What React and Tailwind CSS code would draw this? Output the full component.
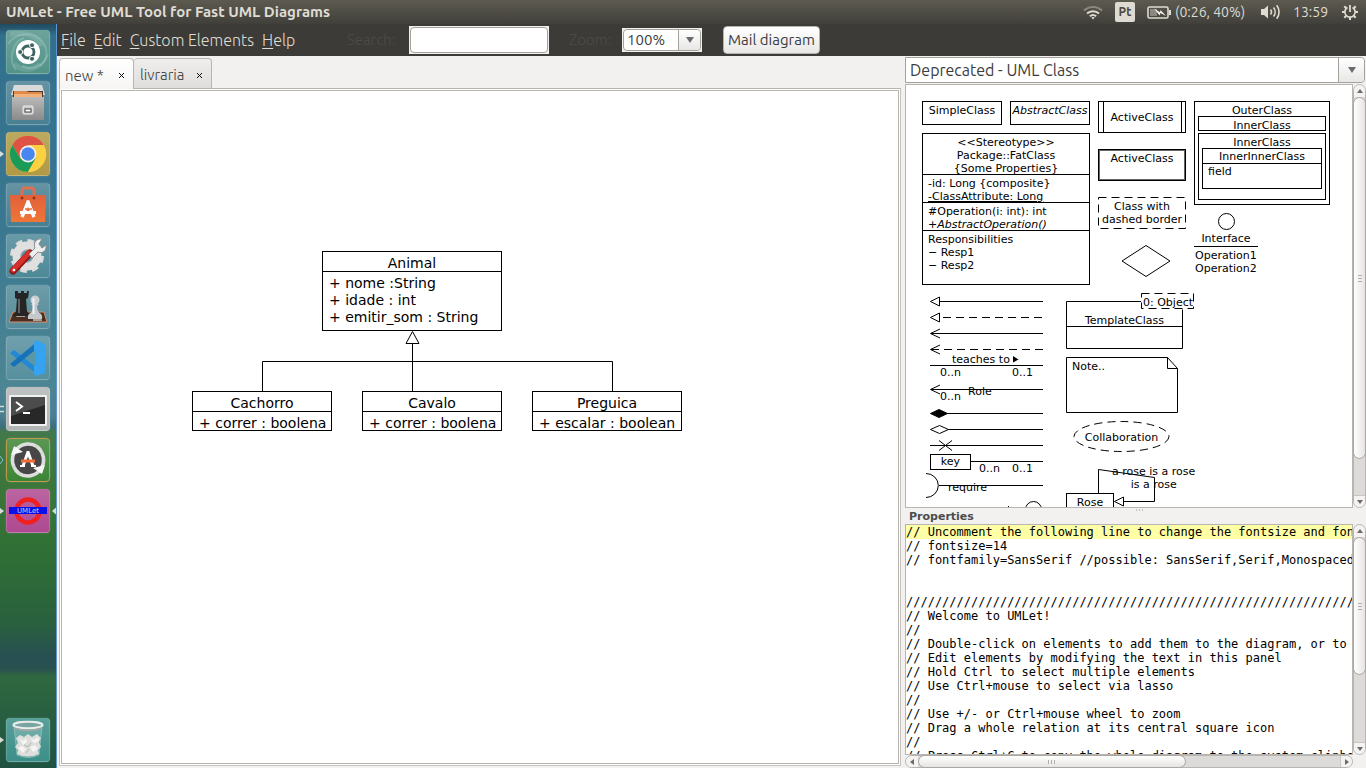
const UI = "font-['Ubuntu','Open_Sans','Noto_Sans',sans-serif]";
const DIAGRAM = "font-['DejaVu_Sans',sans-serif]";

const NOTES = `// Uncomment the following line to change the fontsize and font:
// fontsize=14
// fontfamily=SansSerif //possible: SansSerif,Serif,Monospaced


//////////////////////////////////////////////////////////////////////////////////////////////
// Welcome to UMLet!
//
// Double-click on elements to add them to the diagram, or to copy them
// Edit elements by modifying the text in this panel
// Hold Ctrl to select multiple elements
// Use Ctrl+mouse to select via lasso
//
// Use +/- or Ctrl+mouse wheel to zoom
// Drag a whole relation at its central square icon
//
// Press Ctrl+C to copy the whole diagram to the system clipboard`;

/* ---------- top panel ---------- */

function WifiIcon() {
  return (
    <svg width="20" height="15" viewBox="0 0 20 15" fill="none" strokeWidth="2">
      <path d="M1 5.5a13 13 0 0 1 18 0" stroke="#8b8880" />
      <path d="M4 8.6a9 9 0 0 1 12 0" stroke="#dfdbd2" />
      <path d="M6.8 11.3a5 5 0 0 1 6.4 0" stroke="#dfdbd2" />
      <path d="M8.3 12.6L10 14.6l1.7-2a3 3 0 0 0-3.4 0z" fill="#dfdbd2" />
    </svg>
  );
}

function BatteryIcon() {
  return (
    <svg width="24" height="13" viewBox="0 0 24 13">
      <rect x="1" y="1" width="20" height="11" rx="1.5" fill="none" stroke="#dfdbd2" strokeWidth="1.6" />
      <rect x="22" y="4" width="2" height="5" fill="#dfdbd2" />
      <rect x="3" y="3" width="7" height="7" fill="#8b8880" />
      <path d="M7 2.5l6 3.8.6-2.4L19 10l-5.6-3-.8 2.6z" fill="#f4f1ea" />
    </svg>
  );
}

function VolumeIcon() {
  return (
    <svg width="20" height="16" viewBox="0 0 20 16" fill="none" stroke="#dfdbd2" strokeWidth="1.6">
      <path d="M0 5h3l4-3.5v13L3 11H0z" fill="#dfdbd2" stroke="none" />
      <path d="M9.5 5.5a4 4 0 0 1 0 5" />
      <path d="M12.5 3.5a7 7 0 0 1 0 9" />
      <path d="M15.7 1.2a11 11 0 0 1 0 13.6" />
    </svg>
  );
}

function PowerIcon() {
  return (
    <svg width="16" height="16" viewBox="0 0 16 16" fill="none" stroke="#dfdbd2">
      <path d="M5.500 3.400a5.200 5.200 0 1 0 5 0" strokeWidth="1.700" />
      <path d="M8 1v7" strokeWidth="1.800" />
      <path d="M0 8h3M13 8h3M8 13v3M2.3 2.3l2 2M13.7 2.3l-2 2M2.3 13.7l2-2M13.7 13.7l-2-2" strokeWidth="2" />
    </svg>
  );
}

function TopPanel() {
  return (
    <header className="flex h-6 shrink-0 items-center justify-between bg-gradient-to-b from-[#5d5b50] to-[#403f3a] pl-1.5 pr-2 text-[#dfdbd2]">
      <h1 className="text-[15px] leading-6 font-bold whitespace-nowrap">UMLet - Free UML Tool for Fast UML Diagrams</h1>
      <div className="flex items-center text-sm leading-6 whitespace-nowrap">
        <WifiIcon />
        <span className="ml-3 flex h-5 w-5 items-center justify-center rounded-xs bg-[#dfdbd2] text-xs font-semibold text-[#4a4942]">Pt</span>
        <span className="ml-3"><BatteryIcon /></span>
        <span className="ml-1 w-[86px]">(0:26, 40%)</span>
        <VolumeIcon />
        <time className="ml-3 w-[49px]">13:59</time>
        <PowerIcon />
      </div>
    </header>
  );
}

/* ---------- launcher ---------- */

const UbuntuLogo = () => (
  <svg className="shrink-0" width="44" height="44" viewBox="0 0 44 44">
    <g fill="none" stroke="#b8d8d0" strokeOpacity=".3" strokeWidth="2">
      <path d="M2 14C10 2 30 0 38 14c5 9 2 17-4 22" />
      <path d="M10 40C2 30 6 12 18 8" />
      <path d="M42 24c-3 10-14 18-26 12" />
      <path d="M4 4c8 0 24-4 32 12M8 34c6 6 18 8 26 0" strokeOpacity=".2" strokeWidth="5" />
    </g>
    <circle cx="22" cy="22" r="12" fill="#fff" />
    <circle cx="22" cy="22" r="6" fill="none" stroke="#3d6362" strokeWidth="2.8" />
    <g fill="#3d6362" stroke="#fff" strokeWidth="1">
      <circle cx="14.2" cy="22" r="2.5" />
      <circle cx="26" cy="15.2" r="2.5" />
      <circle cx="26" cy="28.8" r="2.5" />
    </g>
  </svg>
);

const FilesIcon = () => (
  <svg className="shrink-0" width="44" height="44" viewBox="0 0 44 44">
    <path d="M8 4h28l3 10H5z" fill="#d9d9d9" />
    <path d="M7 10h30v6H7z" fill="#4a3a33" />
    <path d="M8 10h13l1 1h14v5H8z" fill="#e08a4a" />
    <path d="M8 13h28v3H8z" fill="#f3b27c" />
    <path d="M6 16h32v22a1 1 0 0 1-1 1H7a1 1 0 0 1-1-1z" fill="url(#cab)" />
    <rect x="17" y="25" width="10" height="8" rx="1" fill="#c8c8c8" stroke="#eee" />
    <rect x="19" y="28" width="6" height="3" fill="#fff" stroke="#444" />
    <defs>
      <linearGradient id="cab" x2="0" y2="1"><stop stopColor="#b9b9b9" /><stop offset="1" stopColor="#8b8b8b" /></linearGradient>
    </defs>
  </svg>
);

const ChromeIcon = () => (
  <svg className="shrink-0" width="44" height="44" viewBox="0 0 44 44">
    <circle cx="22" cy="22" r="18" fill="#fcd040" />
    <path d="M22 22L6.4 13A18 18 0 0 1 37.6 13z" fill="#de5345" />
    <path d="M22 13h15.6A18 18 0 0 0 6.4 13L14.2 26.5z" fill="#de5345" />
    <path d="M6.4 13A18 18 0 0 0 22 40l7.8-13.5L14.2 26.5z" fill="#1a9b58" />
    <path d="M37.6 13A18 18 0 0 1 22 40l7.8-13.5L22 13z" fill="#fcd040" />
    <circle cx="22" cy="22" r="8.4" fill="#f3f1ec" />
    <circle cx="22" cy="22" r="6.8" fill="#4a86f0" />
  </svg>
);

const SoftwareIcon = () => (
  <svg className="shrink-0" width="44" height="44" viewBox="0 0 44 44">
    <path d="M16 15V8q0-3 3-3h6q3 0 3 3v7" fill="none" stroke="#d97152" strokeWidth="3" />
    <path d="M4 12h36l-1 27H5z" fill="url(#bag)" />
    <circle cx="16" cy="15" r="1.4" fill="#8f3316" /><circle cx="28" cy="15" r="1.4" fill="#8f3316" />
    <path d="M22 19l-6 15M22 19l6 15M20.5 19h3" stroke="#fff" strokeWidth="3.4" fill="none" />
    <path d="M14 29.5h16" stroke="#fff" strokeWidth="3" />
    <path d="M19 26h7" stroke="#ee6a32" strokeWidth="1.5" />
    <defs>
      <linearGradient id="bag" x2="0" y2="1"><stop stopColor="#e2603a" /><stop offset="1" stopColor="#ef7638" /></linearGradient>
    </defs>
  </svg>
);

const SettingsIcon = () => (
  <svg className="shrink-0" width="44" height="44" viewBox="0 0 44 44">
    <circle cx="21" cy="22" r="14.5" fill="none" stroke="#dcdcdc" strokeWidth="5" strokeDasharray="6.4 5" />
    <circle cx="21" cy="22" r="10.5" fill="none" stroke="#e0e0e0" strokeWidth="8" />
    <circle cx="21" cy="22" r="6" fill="none" stroke="#b4b4b4" />
    <path d="M7 37L24 19" stroke="#8d1714" strokeWidth="7" strokeLinecap="round" />
    <path d="M7 36L23 19" stroke="#d8302c" strokeWidth="5" strokeLinecap="round" />
    <path d="M23 20l6-6c-2-5 1-10 7-9l-3 5 3 4 4-3c1 6-4 9-8 7l-6 6z" fill="#eee" stroke="#8b8b8b" />
    <circle cx="8" cy="36" r="1.3" fill="#fff" />
  </svg>
);

const ChessIcon = () => (
  <svg className="shrink-0" width="44" height="44" viewBox="0 0 44 44">
    <path d="M7 27h31l3 10H3z" fill="#4b2e22" stroke="#d59476" />
    <path d="M12 28h8l-1 4h-9zM27 32h8l1 4h-9z" fill="#a9a29b" />
    <path d="M9 6h3v2h3V6h3v2h3V6h2l-1 7-2 1 1 12 3 5H7l3-5 1-12-2-1z" fill="#252525" />
    <path d="M13 14v14" stroke="#626262" strokeWidth="2" />
    <circle cx="29" cy="15" r="4.5" fill="#c9ced0" />
    <path d="M25 19h8l-2 2q0 6 4 8 2 2 1 5H22q-1-3 1-5 4-2 4-8z" fill="#c3c8ca" />
    <path d="M27.500 13v16" stroke="#eef1f2" strokeWidth="2" />
  </svg>
);

const CodeIcon = () => (
  <svg className="shrink-0" width="44" height="44" viewBox="0 0 44 44">
    <path d="M4 17l4-3 24 18v7z" fill="#2389d6" />
    <path d="M4 28l4 3L32 12V5z" fill="#1773b8" />
    <path d="M30 4l9 4v29l-9 3-2-2V6z" fill="#35a3ef" />
    <path d="M30 14v17l-11-8.500z" fill="#5a98a8" />
  </svg>
);

const TerminalIcon = () => (
  <svg className="shrink-0" width="44" height="44" viewBox="0 0 44 44">
    <rect x="3" y="8" width="38" height="31" rx="1" fill="#f1f1f1" />
    <rect x="5" y="10" width="34" height="27" fill="#282828" />
    <path d="M5 10h34v8L5 29z" fill="#4c4c4c" />
    <path d="M10 15l6 4.500-6 4.500" fill="none" stroke="#fff" strokeWidth="2" />
    <path d="M17 26h7" stroke="#fff" strokeWidth="2" />
  </svg>
);

const UpdaterIcon = () => (
  <svg className="shrink-0" width="44" height="44" viewBox="0 0 44 44">
    <circle cx="22" cy="22" r="14.500" fill="#474747" />
    <path d="M8 29A16 16 0 0 1 31 8.500" fill="none" stroke="#dedede" strokeWidth="3.500" />
    <path d="M36 15A16 16 0 0 1 13 35.500" fill="none" stroke="#dedede" strokeWidth="3.500" />
    <path d="M31 8.500A16 16 0 0 1 36 15M8 29a16 16 0 0 0 5 6.500" fill="none" stroke="#dedede" strokeWidth="3.500" />
    <path d="M5 17l3-9 9 6zM39 27l-3 9-9-6z" fill="#f6f6f6" />
    <path d="M22 14l-5 14M22 14l5 14M20.500 14.500h3" stroke="#fff" strokeWidth="3" fill="none" />
    <path d="M15 23h14" stroke="#f26d34" strokeWidth="3" />
    <path d="M14 28h5M25 28h5" stroke="#fff" strokeWidth="2" />
  </svg>
);

const UmletIcon = () => (
  <svg className="shrink-0" width="44" height="44" viewBox="0 0 44 44">
    <circle cx="22" cy="22" r="11.500" fill="none" stroke="#f02020" strokeWidth="4.500" />
    <rect x="3" y="18" width="38" height="7" fill="#0a10e8" />
    <text x="22" y="24" textAnchor="middle" fontFamily="DejaVu Sans" fontSize="7" fill="#c8ccff">UMLet</text>
  </svg>
);

const TrashIcon = () => (
  <svg className="shrink-0" width="44" height="44" viewBox="0 0 44 44">
    <path d="M8 8l3 29q11 5 22 0l3-29z" fill="#bfe0dc" fillOpacity=".25" stroke="#b9d6d2" strokeOpacity=".5" />
    <path d="M10 20l4-3 4 2 4-3 4 3 5-3 4 4-2 4 2 5-3 3 1 4q-11 5-22 0l1-4-3-3 3-4z" fill="#dededc" />
    <path d="M13 20l4 3 3-3 1 4-4 3zM24 20l4 2 4-3 1 4-5 2zM12 30l4-2 4 3-3 4zM24 29l5-2 3 4-5 3z" fill="#f5f5f4" />
    <path d="M18 27l4 2 3-4M20 35l3-4" stroke="#b4b5b3" fill="none" />
    <ellipse cx="22" cy="7" rx="14.500" ry="3.200" fill="#78a5a2" stroke="#e8ecea" strokeWidth="2" />
    <path d="M8 10q14 5 28 0" fill="none" stroke="#a1a8a5" strokeWidth="1.500" />
  </svg>
);

const APPS = [
  { name: "Search your computer", icon: UbuntuLogo, tile: "bg-[#529389] border-white/15" },
  { name: "Files", icon: FilesIcon, tile: "bg-[#4a8093] border-white/15" },
  { name: "Chrome", icon: ChromeIcon, tile: "bg-[#b09a45] border-white/15", mark: "left" },
  { name: "Software", icon: SoftwareIcon, tile: "bg-[#4a8093] border-white/15" },
  { name: "System Settings", icon: SettingsIcon, tile: "bg-[#4e8998] border-white/15" },
  { name: "Chess", icon: ChessIcon, tile: "bg-[#558b9a] border-white/15" },
  { name: "Code", icon: CodeIcon, tile: "bg-[#568f9e] border-white/15" },
  { name: "Terminal", icon: TerminalIcon, tile: "bg-[#b2b5b6] border-white/15", mark: "double" },
  { name: "Software Updater", icon: UpdaterIcon, tile: "bg-[#3d8536] border-[#c39a4c]", mark: "open" },
  { name: "UMLet", icon: UmletIcon, tile: "bg-[#ae4990] border-white/15", mark: "both" },
];

function LauncherItem({ app }) {
  const Icon = app.icon;
  return (
    <div className="relative flex h-11 w-full shrink-0 pl-1.5">
      {app.mark && (
        <svg className="absolute left-0 top-[15px]" width="4" height="14" viewBox="0 0 4 14">
          {app.mark === "double" && <path d="M0 4.500h4M0 9.500h4" stroke="#d6d8d6" strokeWidth="1.500" />}
          {app.mark === "open" && <path d="M0 3l3 4-3 4" fill="none" stroke="#7fc0d8" />}
          {(app.mark === "left" || app.mark === "both") && <path d="M0 4l4 3-4 3z" fill="#d9dcda" />}
        </svg>
      )}
      <button
        aria-label={app.name}
        className={"flex h-11 w-11 items-center justify-center rounded-sm border bg-gradient-to-b from-white/15 to-transparent shadow-[0_0_2px_rgba(255,255,255,0.2)] " + app.tile}
      >
        <Icon />
      </button>
      {app.mark === "both" && (
        <svg className="absolute right-0 top-[15px]" width="4" height="14" viewBox="0 0 4 14">
          <path d="M4 3.500L0 7l4 3.500z" fill="#d9dcda" />
        </svg>
      )}
    </div>
  );
}

function Launcher() {
  return (
    <nav
      aria-label="Launcher"
      className="flex w-[57px] shrink-0 flex-col justify-between border-r border-[#5f97ce] bg-[linear-gradient(to_bottom,#1f4a60_0px,#31708d_12px,#3a7790_200px,#4c8593_360px,#4b7f90_392px,#3d6f7c_402px,#42784a_408px,#3a7538_470px,#2f6f35_530px,#29603e_600px,#284e53_635px,#29534d_646px,#2f6840_652px,#1f5240_744px)] pt-1.5 pb-1.5"
    >
      <div className="flex flex-col gap-[7px]">
        {APPS.map((app) => <LauncherItem key={app.name} app={app} />)}
      </div>
      <LauncherItem app={{ name: "Trash", icon: TrashIcon, tile: "bg-[#3c8f89] border-white/15", mark: "left" }} />
    </nav>
  );
}

/* ---------- controls ---------- */

function DropArrow() {
  return (
    <svg width="8" height="6" viewBox="0 0 8 6"><path d="M0 0h8L4 6z" fill="#6b6b6b" /></svg>
  );
}

function MenuBar() {
  return (
    <div className="flex h-8 shrink-0 items-center bg-[#3c3b37] pl-1 text-base leading-5 font-light text-[#dfdbd2]">
      <nav aria-label="Menu" className="flex w-[286px] gap-2 whitespace-nowrap">
        {["File", "Edit", "Custom Elements", "Help"].map((m) => (
          <button key={m}><span className="underline underline-offset-2">{m[0]}</span>{m.slice(1)}</button>
        ))}
      </nav>
      <label htmlFor="search" className="w-[62px] text-[15px] text-[#4c4c4a]">Search:</label>
      <div className="mr-5 w-[140px] bg-[#f2f1f0] p-px">
        <input id="search" type="text" className="block h-[26px] w-full rounded-sm border border-[#a5a29d] bg-white px-1 text-[#3c3c3c]" />
      </div>
      <label htmlFor="zoom" className="w-[53px] text-[15px] text-[#4c4c4a]">Zoom:</label>
      <div className="relative mr-[21px] w-20 bg-[#f2f1f0] p-px">
        <select id="zoom" className="block h-[22px] w-full appearance-none rounded-sm border border-[#a5a29d] bg-white pl-[3px] text-[15px] leading-5 font-normal text-[#3c3c3c]">
          <option>100%</option>
        </select>
        <span className="pointer-events-none absolute inset-y-0.5 right-0.5 flex w-[22px] items-center justify-center rounded-r-sm border-l border-[#a5a29d] bg-gradient-to-b from-white to-[#e8e7e6]"><DropArrow /></span>
      </div>
      <button className="h-7 w-[97px] rounded-sm border border-[#b5b3af] bg-gradient-to-b from-white to-[#e9e8e7] text-[15px] font-normal whitespace-nowrap text-[#3c3c3c]">Mail diagram</button>
    </div>
  );
}

function CloseTab({ name }) {
  return (
    <button aria-label={"Close " + name} className="flex h-4 w-4 items-center justify-center">
      <svg width="7" height="7" viewBox="0 0 7 7" stroke="#111"><path d="M1 1l5 5M6 1L1 6" /></svg>
    </button>
  );
}

function Tabs() {
  return (
    <div className="relative z-10 flex h-8 items-end text-[15px] leading-5 font-light text-[#3c3c3c]">
      <div className="flex h-[31px] w-[75px] shrink-0 items-center justify-between rounded-t border border-b-0 border-[#b8b5b0] bg-gradient-to-b from-white to-[#f6f5f4] pt-[3px] pr-1 pl-[5px]">
        <button className="whitespace-nowrap">new *</button>
        <CloseTab name="new" />
      </div>
      <div className="flex h-[31px] w-[78px] shrink-0 items-center justify-between rounded-t border border-l-0 border-[#b8b5b0] bg-gradient-to-b from-[#efeeed] to-[#dfdedc] pt-[3px] pr-1 pl-[6px]">
        <button>livraria</button>
        <CloseTab name="livraria" />
      </div>
      <div className="h-px grow bg-[#b8b5b0]" />
    </div>
  );
}

/* ---------- class diagram ---------- */

function UmlClass({ place, title, rows }) {
  return (
    <section className={"absolute border border-black bg-white text-sm leading-[17px] whitespace-nowrap " + place}>
      <h2 className="h-5 border-b border-black pt-[3px] text-center">{title}</h2>
      <ul className="pt-[3px] pl-1.5">
        {rows.map((r) => <li key={r}>{r}</li>)}
      </ul>
    </section>
  );
}

function Diagram() {
  return (
    <div className={"relative min-h-0 grow overflow-hidden border border-[#b8b5b0] bg-white text-black " + DIAGRAM}>
      <svg className="absolute top-0 left-0" width="700" height="400" viewBox="0 0 700 400" fill="none" stroke="#000">
        <path d="M200.500 300v-29.500h350V300M350.500 300v-47" />
        <path d="M350.500 240.500l6.500 12h-13z" />
      </svg>
      <UmlClass place="left-[260px] top-[160px] h-20 w-[180px]" title="Animal" rows={["+ nome :String", "+ idade : int", "+ emitir_som : String"]} />
      <UmlClass place="left-[130px] top-[300px] h-10 w-[140px]" title="Cachorro" rows={["+ correr : boolena"]} />
      <UmlClass place="left-[300px] top-[300px] h-10 w-[140px]" title="Cavalo" rows={["+ correr : boolena"]} />
      <UmlClass place="left-[470px] top-[300px] h-10 w-[150px]" title="Preguica" rows={["+ escalar : boolean"]} />
    </div>
  );
}

/* ---------- palette ---------- */

function PaletteLines() {
  return (
    <svg className="absolute top-0 left-0" width="446" height="424" viewBox="906 85 446 424" fill="none" stroke="#000">
      <path d="M1103.500 101v32M1181.500 101v32" />
      <path d="M1098.500 197.500h87v31h-87z" strokeDasharray="8 5" />
      <path d="M1122 261l24-15.500 24 15.500-24 15.500z" />
      <circle cx="1226.500" cy="221.500" r="8" />
      <path d="M1194 246.500h64" />

      <path d="M940 301.500h103M930.500 301.500l9-4.500v9z" />
      <path d="M930.500 317.500l9-4.500v9z" />
      <path d="M943 317.500h100" strokeDasharray="8 5" />
      <path d="M931 333.500h112M940 329l-9.500 4.500 9.500 4.500" />
      <path d="M931 349.500h112" strokeDasharray="8 5" />
      <path d="M940 345l-9.500 4.500 9.500 4.500" />
      <path d="M930 365.500h113" />
      <path d="M931 389.500h112M940 385l-9.500 4.500 9.500 4.500" />
      <path d="M947 413.500h96" />
      <path d="M930.500 413.500l8.500-4 8.500 4-8.500 4z" fill="#000" />
      <path d="M948 429.500h95M930.500 429.500l9-4 9 4-9 4z" />
      <path d="M930 445.500h113M939 440.500l13 10M952 440.500l-13 10" />
      <path d="M971 461.500h72" />
      <path d="M926 473.500a12.300 12 0 0 1 0 24M939 485.500h104" />
      <circle cx="1033.500" cy="509.500" r="8" />
      <path d="M1008.500 506v1" />
      <path d="M1013 356l5.500 3.500-5.500 3z" fill="#000" stroke="none" />

      <path d="M1141 301.500h-74.500v47h116v-39M1066.500 326.500h116" />
      <path d="M1141.500 293.500h52v15h-52z" strokeDasharray="8 5" />
      <path d="M1066.500 357.500h101l10 11v44h-111zM1167.500 357.500v11h10" />
      <ellipse cx="1121.500" cy="436.500" rx="47.500" ry="15" strokeDasharray="8 5" />
      <path d="M1098.500 493v-23.500l56 8v24H1124M1114.500 501.500l9-4.500v9z" />
    </svg>
  );
}

function Box({ place, children }) {
  return <div className={"absolute border border-black " + place}>{children}</div>;
}

function Text({ place, children }) {
  return <span className={"absolute " + place}>{children}</span>;
}

function Palette() {
  return (
    <div className={"relative min-w-0 grow overflow-hidden border border-[#b8b5b0] bg-white text-[11px] leading-[13px] whitespace-nowrap text-black " + DIAGRAM}>
      <PaletteLines />
      <Box place="left-4 top-4 h-6 w-20 pt-0.5 text-center">SimpleClass</Box>
      <Box place="left-[104px] top-4 h-6 w-20 pt-0.5 text-center italic">AbstractClass</Box>
      <Box place="left-4 top-12 h-[152px] w-[168px]">
        <div className="h-[41px] border-b border-black pt-0.5 text-center">&lt;&lt;Stereotype&gt;&gt;<br />Package::FatClass<br />{"{Some Properties}"}</div>
        <div className="h-7 border-b border-black pt-0.5 pl-[5px]">-id: Long {"{composite}"}<br /><span className="underline">-ClassAttribute: Long</span></div>
        <div className="h-7 border-b border-black pt-0.5 pl-[5px]">#Operation(i: int): int<br /><em>+AbstractOperation()</em></div>
        <div className="pt-0.5 pl-[5px]">Responsibilities<br />− Resp1<br />− Resp2</div>
      </Box>

      <Box place="left-48 top-4 h-8 w-[88px] pt-[9px] text-center">ActiveClass</Box>
      <Box place="left-48 top-16 h-8 w-[88px] pt-0.5 text-center shadow-[inset_0_0_0_1px_#666]">ActiveClass</Box>
      <Text place="left-48 top-[115px] w-[88px] text-center">Class with<br />dashed border</Text>

      <Box place="left-72 top-4 h-[104px] w-[136px] px-[3px] pt-0.5 text-center">
        <div className="h-3">OuterClass</div>
        <div className="h-[15px] border border-black pt-0.5">InnerClass</div>
        <div className="mt-0.5 h-[67px] border border-black px-[3px] pt-0.5">
          <div className="h-3">InnerClass</div>
          <div className="h-[41px] border border-black">
            <div className="h-[15px] border-b border-black pt-px">InnerInnerClass</div>
            <div className="pt-px pl-[5px] text-left">field</div>
          </div>
        </div>
      </Box>
      <Text place="left-72 top-[147px] w-16 text-center">Interface</Text>
      <Text place="left-[289px] top-[164px]">Operation1<br />Operation2</Text>

      <Text place="left-[46px] top-[268px]">teaches to</Text>
      <Text place="left-[34px] top-[281px]">0..n</Text>
      <Text place="left-[106px] top-[281px]">0..1</Text>
      <Text place="left-[62px] top-[300px]">Role</Text>
      <Text place="left-[34px] top-[305px]">0..n</Text>
      <Box place="left-6 top-[369px] h-4 w-[41px] text-center">key</Box>
      <Text place="left-[73px] top-[377px]">0..n</Text>
      <Text place="left-[106px] top-[377px]">0..1</Text>
      <Text place="left-[42px] top-[396px]">require</Text>

      <Text place="left-[237px] top-[211px]">0: Object</Text>
      <Text place="left-[160px] top-[229px] w-[117px] text-center">TemplateClass</Text>
      <Text place="left-[166px] top-[275px]">Note..</Text>
      <Text place="left-[168px] top-[346px] w-[95px] text-center">Collaboration</Text>
      <Text place="left-[206px] top-[380px] text-center">a rose is a rose<br />is a rose</Text>
      <Box place="left-[160px] top-[408px] h-6 w-12 pt-[2px] text-center">Rose</Box>
    </div>
  );
}

/* ---------- scroll bars ---------- */

function Arrow({ turn }) {
  return (
    <svg className={turn} width="6" height="4" viewBox="0 0 6 4"><path d="M0 4h6L3 0z" fill="#6b6b6b" /></svg>
  );
}

function VScroll({ thumb }) {
  return (
    <div className="flex w-[13px] shrink-0 flex-col rounded-full border border-[#b8b5b0] bg-[#dcdbd9]">
      <button aria-label="Scroll up" className="flex h-3 shrink-0 items-center justify-center rounded-t-full bg-[#f4f3f2]"><Arrow turn="" /></button>
      <div className={"-mx-px flex flex-col items-center justify-center gap-0.5 rounded-full border border-[#aaa7a2] bg-gradient-to-r from-white to-[#e6e5e3] " + thumb}>
        <i className="h-px w-1 bg-[#b0aeaa]" /><i className="h-px w-1 bg-[#b0aeaa]" /><i className="h-px w-1 bg-[#b0aeaa]" />
      </div>
      <div className="grow" />
      <button aria-label="Scroll down" className="flex h-3 shrink-0 items-center justify-center rounded-b-full border-t border-[#c8c6c2] bg-[#f4f3f2]"><Arrow turn="rotate-180" /></button>
    </div>
  );
}

function HScroll() {
  return (
    <div className="mr-[13px] flex h-[13px] shrink-0 rounded-full border border-[#b8b5b0] bg-[#dcdbd9]">
      <button aria-label="Scroll left" className="flex w-3 shrink-0 items-center justify-center rounded-l-full bg-[#f4f3f2]"><Arrow turn="-rotate-90" /></button>
      <div className="-my-px flex w-3/5 items-center justify-center gap-0.5 rounded-full border border-[#aaa7a2] bg-gradient-to-b from-white to-[#e6e5e3]">
        <i className="h-1 w-px bg-[#b0aeaa]" /><i className="h-1 w-px bg-[#b0aeaa]" /><i className="h-1 w-px bg-[#b0aeaa]" />
      </div>
      <div className="grow" />
      <button aria-label="Scroll right" className="flex w-3 shrink-0 items-center justify-center rounded-r-full border-l border-[#c8c6c2] bg-[#f4f3f2]"><Arrow turn="rotate-90" /></button>
    </div>
  );
}

/* ---------- side column ---------- */

function SideColumn() {
  return (
    <aside className="flex w-[461px] shrink-0 flex-col">
      <div className="relative mt-px mr-px mb-px h-[26px] shrink-0">
        <select aria-label="Palette" className="block h-full w-full appearance-none rounded-r border border-[#a5a29d] bg-white pl-1 text-base leading-5 text-[#3c3c3c]">
          <option>Deprecated - UML Class</option>
        </select>
        <span className="pointer-events-none absolute inset-y-px right-px flex w-[26px] items-center justify-center rounded-r border-l border-[#a5a29d] bg-gradient-to-b from-white to-[#e8e7e6]"><DropArrow /></span>
      </div>
      <div className="flex h-[424px] shrink-0">
        <Palette />
        <VScroll thumb="h-[362px]" />
      </div>
      <div className="relative flex h-4 shrink-0 items-end pl-1">
        <label htmlFor="props" className="font-['DejaVu_Sans',sans-serif] text-[11px] leading-[14px] font-bold text-[#4c4c4c]">Properties</label>
        <span className="absolute top-px left-1/2 flex gap-0.5">
          <i className="h-0.5 w-px bg-[#c4c2be]" /><i className="h-0.5 w-px bg-[#c4c2be]" /><i className="h-0.5 w-px bg-[#c4c2be]" />
        </span>
      </div>
      <div className="flex min-h-0 grow">
        <textarea
          id="props"
          wrap="off"
          spellCheck={false}
          defaultValue={NOTES}
          className="min-w-0 grow resize-none overflow-hidden border border-[#b8b5b0] bg-[linear-gradient(#ffffa5_0px,#ffffa5_14px,#ffffff_14px)] font-['DejaVu_Sans_Mono',monospace] text-[12px] leading-[14px] text-black outline-none"
        />
        <VScroll thumb="h-[138px]" />
      </div>
      <HScroll />
    </aside>
  );
}

export default function App() {
  return (
    <div className={"flex h-screen flex-col overflow-hidden bg-[#f2f1f0] " + UI}>
      <TopPanel />
      <div className="flex min-h-0 grow">
        <Launcher />
        <div className="flex min-w-0 grow flex-col">
          <MenuBar />
          <div className="flex min-h-0 grow">
            <main className="flex min-w-0 grow flex-col pt-px pr-1 pb-0.5 pl-0.5">
              <Tabs />
              <div className="flex min-h-0 grow flex-col border border-t-0 border-[#c6c3be] bg-white p-px">
                <Diagram />
              </div>
            </main>
            <SideColumn />
          </div>
        </div>
      </div>
    </div>
  );
}
